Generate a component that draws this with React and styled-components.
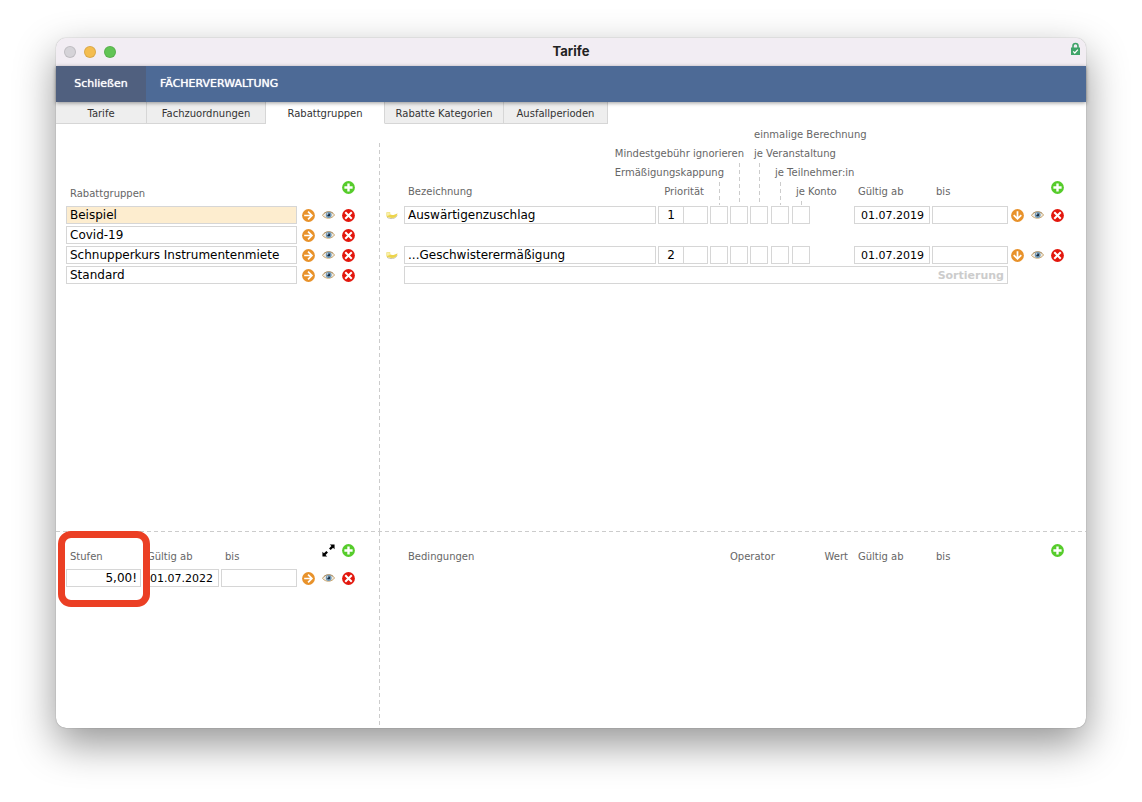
import React from "react";
import styled, { createGlobalStyle, css } from "styled-components";

const Global = createGlobalStyle`
  * { box-sizing: border-box; }
  body { margin: 0; background: #fff; font-family: Verdana, "DejaVu Sans", sans-serif; font-size: 11px; color: #000; }
  button, input { font: inherit; }
`;

const dashY = "repeating-linear-gradient(to bottom, #ccc 0 4px, transparent 4px 7px)";
const dashX = "repeating-linear-gradient(to right, #ccc 0 4px, transparent 4px 7px)";

const Desktop = styled.div`
  min-height: 100vh;
  padding: 38px 56px 74px;
  display: flex;
`;
const Window = styled.main`
  flex: 1;
  min-width: 0;
  display: flex;
  flex-direction: column;
  background: #fff;
  border-radius: 10px;
  box-shadow: 0 0 1px rgba(0, 0, 0, 0.5), 0 16px 40px rgba(0, 0, 0, 0.42);
`;
const TitleBar = styled.header`
  display: grid;
  grid-template-columns: 1fr auto 1fr;
  align-items: center;
  height: 28px;
  background: #f2edf3;
  border-radius: 10px 10px 0 0;
`;
const Lights = styled.div`
  display: flex;
  gap: 8px;
  padding-left: 8px;
`;
const Light = styled.button`
  width: 12px;
  height: 12px;
  padding: 0;
  border: 1px solid rgba(0, 0, 0, 0.1);
  border-radius: 50%;
  background: ${(p) => p.$color};
`;
const Title = styled.h1`
  margin: 0;
  padding-bottom: 2px;
  font: 700 13px/16px Inter, sans-serif;
  color: #222;
`;
const LockIcon = styled.svg`
  justify-self: end;
  margin: 0 5px 6px 0;
`;
const Toolbar = styled.nav`
  position: relative;
  display: flex;
  height: 36px;
  background: #4d6a96;
  color: #fff;
  font-size: 11px;
  line-height: 36px;
  text-shadow: 0 0 1px #fff;
  box-shadow: 0 1px 4px rgba(0, 0, 0, 0.4);
`;
const CloseButton = styled.button`
  width: 90px;
  padding: 0;
  border: 0;
  background: #50607f;
  color: inherit;
  text-shadow: inherit;
`;
const Module = styled.span`
  padding-left: 14px;
`;
const Tabs = styled.div`
  display: flex;
  height: 22px;
`;
const Tab = styled.button`
  width: ${(p) => p.$width}px;
  padding: 2px 0 0;
  border: solid #d6d6d6;
  border-width: 0 1px 1px 0;
  background: #eee;
  color: #333;
  font-size: 10px;
  ${(p) => p.$active && css`
    background: #fff;
    border-bottom-color: #fff;
  `}
`;
const Section = styled.section`
  display: grid;
  grid-template-columns: 324px minmax(0, 1fr);
  ${(p) => p.$grow ? css`flex: 1;` : css`
    min-height: 197px;
    padding-top: 1px;
    background: ${dashX} 0 0 / 100% 1px no-repeat;
  `}
`;
const SidePane = styled.div`
  position: relative;
  padding: 0 25px 0 10px;
  background: ${dashY} 100% ${(p) => p.$lineTop || 0}px / 1px 100% no-repeat;
`;
const MainPane = styled.div`
  padding: 0 22px 0 6px;
`;
const SideHead = styled.div`
  display: grid;
  grid-template-columns: 75px 76px 76px 1fr;
  column-gap: 2px;
  align-items: end;
  height: ${(p) => p.$height}px;
  padding-bottom: 5px;
`;
const Label = styled.span`
  padding: 0 4px;
  font-size: 10px;
  line-height: 14px;
  color: #666;
  white-space: nowrap;
  text-align: ${(p) => p.$align || "left"};
`;
const HeadActions = styled.div`
  display: flex;
  justify-content: flex-end;
  align-items: center;
  gap: 7px;
  margin-bottom: 7px;
`;
const Rows = styled.div`
  display: grid;
  row-gap: 2px;
`;
const SideRow = styled.div`
  display: grid;
  grid-template-columns: ${(p) => (p.$dated ? "75px 76px 76px" : "231px")} auto;
  column-gap: 2px;
`;
const Actions = styled.div`
  display: flex;
  align-items: center;
  gap: 7px;
  padding-left: ${(p) => p.$pad}px;
`;
const Field = styled.input`
  width: 100%;
  height: 18px;
  min-width: 0;
  padding: 0 3px;
  border: 1px solid #d6d6d6;
  border-radius: 0;
  outline: 0;
  background: ${(p) => (p.$selected ? "#fdedcf" : "#fff")};
  color: #000;
  font-size: 12px;
  text-align: ${(p) => p.$align || "left"};
  &::placeholder { color: #ccc; opacity: 1; }
`;
const DateField = styled(Field)`
  padding: 0 5px;
  font-size: 11px;
  text-align: right;
`;
const Check = styled.input`
  appearance: none;
  width: 18px;
  height: 18px;
  margin: 0;
  border: 1px solid #d6d6d6;
  background: #fff;
`;
const Pair = styled.div`
  display: grid;
  grid-template-columns: 26px 25px;
  width: 50px;
  & > * + * { margin-left: -1px; }
`;
const mainColumns = "16px minmax(0, 1fr) 50px 18px 18px 19px 19px 60px 76px 76px 54px";
const MainHead = styled.div`
  display: grid;
  grid-template-columns: ${mainColumns};
  grid-template-rows: repeat(4, 19px) 4px;
  column-gap: 2px;
  align-items: center;
  height: 82px;
  padding-top: 1px;
`;
const HeadLabel = styled(Label)`
  grid-row: ${(p) => p.$row};
  grid-column: ${(p) => p.$cols};
  justify-self: ${(p) => p.$justify || "start"};
`;
const Guide = styled.i`
  grid-row: ${(p) => p.$from} / 6;
  grid-column: ${(p) => p.$col};
  align-self: stretch;
  width: 1px;
  margin-left: 9px;
  background: ${dashY};
`;
const HeadAdd = styled.div`
  grid-row: 4;
  grid-column: 11;
  justify-self: end;
  display: flex;
  margin-bottom: 9px;
`;
const MainRow = styled.div`
  display: grid;
  grid-template-columns: ${mainColumns};
  column-gap: 2px;
  align-items: center;
  margin-bottom: ${(p) => (p.$spaced ? 20 : 0)}px;
`;
const SortRow = styled.div`
  padding: 0 56px 0 18px;
  input { font-size: 11px; font-weight: 600; }
`;
const ConditionHead = styled.div`
  display: grid;
  grid-template-columns: 16px minmax(0, 1fr) 76px 48px 76px 76px 54px;
  column-gap: 2px;
  align-items: end;
  height: 37px;
  padding-bottom: 5px;
`;
const IconButton = styled.button`
  display: flex;
  width: 13px;
  height: 13px;
  padding: 0;
  border: 0;
  background: none;
  svg { width: 13px; height: 13px; }
`;
const Highlight = styled.div`
  position: absolute;
  left: 2px;
  top: -1px;
  width: 92px;
  height: 76px;
  border: 7px solid #eb3f24;
  border-radius: 13px;
  pointer-events: none;
`;

const discs = {
  add: ["#56cc2b", "M6 2.2v7.6M2.2 6h7.6", 2.2],
  next: ["#e8922b", "M2 6h7M5.600 2.500 9.100 6 5.600 9.500", 1.6],
  down: ["#e8922b", "M6 2v7M2.500 5.600 6 9.100 9.500 5.600", 1.6],
  remove: ["#e3170d", "M3 3l6 6M9 3 3 9", 1.9],
};
const Disc = ({ kind, label }) => {
  const [fill, d, width] = discs[kind];
  return (
    <IconButton aria-label={label}>
      <svg viewBox="0 0 12 12">
        <circle cx="6" cy="6" r="5.900" fill={fill} />
        <path d={d} fill="none" stroke="#fff" strokeWidth={width} />
      </svg>
    </IconButton>
  );
};
const Eye = () => (
  <IconButton aria-label="Anzeigen">
    <svg viewBox="0 0 12 12">
      <path d="M.4 5.900C2.800 1.800 8.800 1.600 11.600 5.500 9 9.300 3.600 9.600.4 5.900Z" fill="#f1ece4" stroke="#c39a5a" strokeWidth=".8" />
      <path d="M1.500 4.400C4 1.900 8 1.900 10.500 4" fill="none" stroke="#96805f" strokeWidth=".7" />
      <circle cx="6.200" cy="5.500" r="2.700" fill="#6f97b5" />
      <circle cx="6.200" cy="5.500" r="1.300" fill="#16293c" />
      <circle cx="5.300" cy="4.600" r=".6" fill="#fff" />
    </svg>
  </IconButton>
);
const Expand = () => (
  <IconButton aria-label="Vergrößern">
    <svg viewBox="0 0 12 12">
      <path d="M7.200.4h4.400v4.400L10.200 3.400 8 5.600 6.500 4.100 8.700 1.900ZM4.800 11.600H.4V7.200L1.800 8.600 4 6.400 5.500 7.900 3.300 10.100Z" fill="#000" />
    </svg>
  </IconButton>
);
const Pointer = () => (
  <svg width="12" height="12" viewBox="0 0 12 12" aria-hidden="true">
    <path d="M1 8.300C4 10.300 9.500 10 11.200 6.500" fill="none" stroke="#c9c3ae" strokeWidth="1" />
    <path d="M.5 3.200H4.200V5.600C6 6.300 9 6 11.500 4.200 11.300 7.300 9 8.900 6 8.900 3.500 8.900 1.500 8.500.5 7.600Z" fill="#ecd44c" />
    <path d="M.9 3.600H3.800V6L1 7Z" fill="#f8efa8" />
  </svg>
);

const RowActions = ({ kind = "next", pad }) => (
  <Actions $pad={pad}>
    <Disc kind={kind} label="Öffnen" />
    <Eye />
    <Disc kind="remove" label="Löschen" />
  </Actions>
);

const tabs = [["Tarife", 91], ["Fachzuordnungen", 119], ["Rabattgruppen", 119], ["Rabatte Kategorien", 119], ["Ausfallperioden", 104]];
const groups = ["Beispiel", "Covid-19", "Schnupperkurs Instrumentenmiete", "Standard"];
const discounts = [["Auswärtigenzuschlag", "1"], ["...Geschwisterermäßigung", "2"]];
const flags = ["Ermäßigungskappung", "Mindestgebühr ignorieren", "je Veranstaltung", "je Teilnehmer:in", "je Konto"];

export default function App() {
  return (
    <Desktop>
      <Global />
      <Window>
        <TitleBar>
          <Lights>
            <Light $color="#d5d3d8" aria-label="Fenster schließen" />
            <Light $color="#f4bd4f" aria-label="Minimieren" />
            <Light $color="#61c454" aria-label="Maximieren" />
          </Lights>
          <Title>Tarife</Title>
          <LockIcon width="11" height="14" viewBox="0 0 11 14">
            <path d="M3 6V4a2.500 2.500 0 0 1 5 0v2" fill="none" stroke="#3fa468" strokeWidth="1.600" />
            <path d="M1 5.500h9V13H1Z" fill="#3fa468" />
            <path d="M3.200 9.300 4.800 11 7.900 7.600" fill="none" stroke="#fff" strokeWidth="1.200" />
          </LockIcon>
        </TitleBar>
        <Toolbar>
          <CloseButton>Schließen</CloseButton>
          <Module>FÄCHERVERWALTUNG</Module>
        </Toolbar>
        <Tabs role="tablist">
          {tabs.map(([name, width]) => (
            <Tab key={name} role="tab" $width={width} $active={name === "Rabattgruppen"} aria-selected={name === "Rabattgruppen"}>{name}</Tab>
          ))}
        </Tabs>

        <Section $grow>
          <SidePane $lineTop={19}>
            <SideHead $height={82}>
              <Label>Rabattgruppen</Label>
              <span />
              <span />
              <HeadActions><Disc kind="add" label="Rabattgruppe hinzufügen" /></HeadActions>
            </SideHead>
            <Rows>
              {groups.map((name, i) => (
                <SideRow key={name}>
                  <Field aria-label="Rabattgruppe" defaultValue={name} $selected={i === 0} />
                  <RowActions pad={3} />
                </SideRow>
              ))}
            </Rows>
          </SidePane>
          <MainPane>
            <MainHead>
              <HeadLabel $row={1} $cols="6 / 10">einmalige Berechnung</HeadLabel>
              <HeadLabel $row={2} $cols="2 / 6" $justify="end">Mindestgebühr ignorieren</HeadLabel>
              <HeadLabel $row={2} $cols="6 / 10">je Veranstaltung</HeadLabel>
              <HeadLabel $row={3} $cols="2 / 5" $justify="end">Ermäßigungskappung</HeadLabel>
              <HeadLabel $row={3} $cols="7 / 10">je Teilnehmer:in</HeadLabel>
              <HeadLabel $row={4} $cols="2">Bezeichnung</HeadLabel>
              <HeadLabel $row={4} $cols="3" $justify="end">Priorität</HeadLabel>
              <HeadLabel $row={4} $cols="8">je Konto</HeadLabel>
              <HeadLabel $row={4} $cols="9">Gültig ab</HeadLabel>
              <HeadLabel $row={4} $cols="10">bis</HeadLabel>
              <HeadAdd><Disc kind="add" label="Rabatt hinzufügen" /></HeadAdd>
              <Guide $from={4} $col={4} />
              <Guide $from={3} $col={5} />
              <Guide $from={3} $col={6} />
              <Guide $from={4} $col={7} />
              <Guide $from={5} $col={8} />
            </MainHead>
            <Rows>
              {discounts.map(([name, priority], i) => (
                <MainRow key={name} $spaced={i === 0}>
                  <Pointer />
                  <Field aria-label="Bezeichnung" defaultValue={name} />
                  <Pair>
                    <Field aria-label="Priorität" defaultValue={priority} $align="center" />
                    <Field aria-label="Priorität Zusatz" />
                  </Pair>
                  {flags.map((flag) => <Check key={flag} type="checkbox" aria-label={flag} />)}
                  <DateField aria-label="Gültig ab" defaultValue="01.07.2019" />
                  <DateField aria-label="bis" />
                  <RowActions kind="down" pad={1} />
                </MainRow>
              ))}
              <SortRow><Field aria-label="Sortierung" placeholder="Sortierung" $align="right" /></SortRow>
            </Rows>
          </MainPane>
        </Section>

        <Section>
          <SidePane>
            <SideHead $height={37}>
              <Label>Stufen</Label>
              <Label>Gültig ab</Label>
              <Label>bis</Label>
              <HeadActions><Expand /><Disc kind="add" label="Stufe hinzufügen" /></HeadActions>
            </SideHead>
            <SideRow $dated>
              <Field aria-label="Stufe" defaultValue="5,00!" $align="right" />
              <DateField aria-label="Gültig ab" defaultValue="01.07.2022" />
              <DateField aria-label="bis" />
              <RowActions pad={3} />
            </SideRow>
            <Highlight />
          </SidePane>
          <MainPane>
            <ConditionHead>
              <span />
              <Label>Bedingungen</Label>
              <Label>Operator</Label>
              <Label $align="right">Wert</Label>
              <Label>Gültig ab</Label>
              <Label>bis</Label>
              <HeadActions><Disc kind="add" label="Bedingung hinzufügen" /></HeadActions>
            </ConditionHead>
          </MainPane>
        </Section>
      </Window>
    </Desktop>
  );
}
